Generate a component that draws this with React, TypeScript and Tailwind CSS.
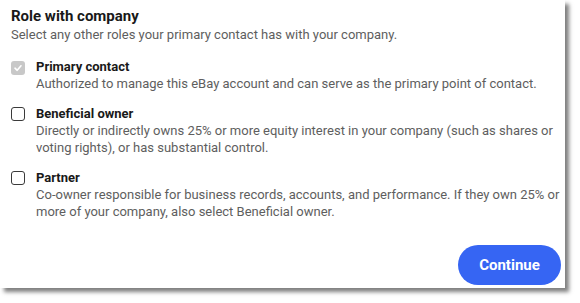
import React from "react";

function Box({ checked }: { checked?: boolean }) {
  if (checked) {
    return (
      <div className="mt-[3px] flex h-[14px] w-[14px] shrink-0 items-center justify-center rounded-[3px] bg-[#c8c8c8]">
        <svg width="10" height="10" viewBox="0 0 10 10">
          <path d="M2 5.2 L4.2 7.3 L8 2.8" fill="none" stroke="#ffffff" strokeWidth="1.6" strokeLinecap="round" strokeLinejoin="round" />
        </svg>
      </div>
    );
  }
  return <div className="mt-[2px] h-[14px] w-[14px] shrink-0 rounded-[3px] border-[1.5px] border-[#3a3a3a]" />;
}

function Option({ label, desc, checked }: { label: string; desc: React.ReactNode; checked?: boolean }) {
  return (
    <div className="flex gap-[11px]">
      <Box checked={checked} />
      <div>
        <div className="text-[13px] leading-[17px] font-bold text-[#191919]">{label}</div>
        <div className="text-[13px] leading-[17px] text-[#5e5e5e]">{desc}</div>
      </div>
    </div>
  );
}

export default function App() {
  return (
    <div className="h-[303px] w-[580px] bg-white" style={{ fontFamily: "Roboto, 'Liberation Sans', sans-serif" }}>
      <div className="h-[288px] w-[565px] bg-white shadow-[4px_4px_4px_rgba(0,0,0,0.5)]">
        <div className="flex h-full flex-col pl-[11px] pr-[4px] pt-[6px] pb-[3px]">
          <div className="text-[15px] leading-[20px] font-bold text-[#191919]">Role with company</div>
          <div className="text-[13px] leading-[17px] text-[#5e5e5e]">
            Select any other roles your primary contact has with your company.
          </div>
          <div className="mt-[15px] flex flex-col gap-[13px]">
            <Option
              checked
              label="Primary contact"
              desc="Authorized to manage this eBay account and can serve as the primary point of contact."
            />
            <Option
              label="Beneficial owner"
              desc={
                <>
                  Directly or indirectly owns 25% or more equity interest in your company (such as shares or
                  <br />
                  voting rights), or has substantial control.
                </>
              }
            />
            <Option
              label="Partner"
              desc={
                <>
                  Co-owner responsible for business records, accounts, and performance. If they own 25% or
                  <br />
                  more of your company, also select Beneficial owner.
                </>
              }
            />
          </div>
          <div className="mt-auto flex justify-end">
            <button className="h-[40px] w-[103px] rounded-full bg-[#3665f3] text-[15px] font-bold text-white">
              Continue
            </button>
          </div>
        </div>
      </div>
    </div>
  );
}
